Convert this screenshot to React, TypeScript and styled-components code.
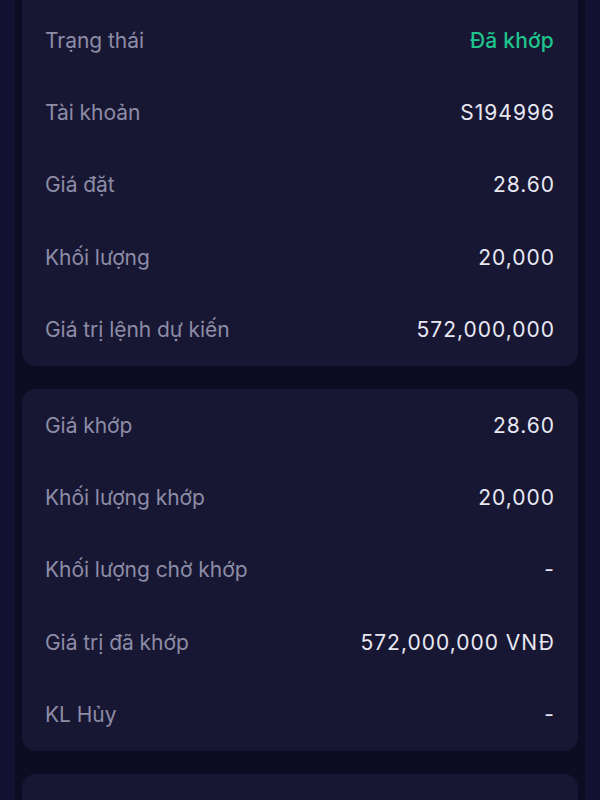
import React from "react";
import styled, { createGlobalStyle } from "styled-components";

const Global = createGlobalStyle`
  html, body { margin: 0; padding: 0; background: #121131; }
  body { font-family: Inter, "Noto Sans", sans-serif; -webkit-font-smoothing: antialiased; }
`;

const Page = styled.div`
  width: 600px;
  height: 800px;
  overflow: hidden;
  background: #121131;
  display: flex;
  justify-content: center;
`;

const Panel = styled.div`
  width: 570px;
  background: #0d0c23;
  padding: 0 7px;
  box-sizing: border-box;
  display: flex;
  flex-direction: column;
  gap: 23px;
`;

const Card = styled.div<{ $top?: boolean }>`
  flex-shrink: 0;
  background: #181733;
  border-radius: 14px;
  padding: 0 24px 0 23px;
  display: flex;
  flex-direction: column;
  margin-top: ${(p) => (p.$top ? "-20px" : "0")};
  padding-top: ${(p) => (p.$top ? "24px" : "0")};
  min-height: ${(p) => (p.$top ? "0" : "100px")};
`;

const Row = styled.div`
  flex-shrink: 0;
  height: 72.4px;
  display: flex;
  align-items: center;
  justify-content: space-between;
  font-size: 21px;
`;

const Label = styled.span`
  color: #8d8ca6;
  letter-spacing: -0.05px;
`;

const Value = styled.span<{ $tone?: "green" }>`
  color: ${(p) => (p.$tone === "green" ? "#1fc48c" : "#e8e8f2")};
  font-weight: ${(p) => (p.$tone === "green" ? 500 : 400)};
  letter-spacing: ${(p) => (p.$tone === "green" ? "0.2px" : "1px")};
  margin-right: ${(p) => (p.$tone === "green" ? "0" : "-1px")};
`;

type Item = { label: string; value: string; tone?: "green" };

const first: Item[] = [
  { label: "Trạng thái", value: "Đã khớp", tone: "green" },
  { label: "Tài khoản", value: "S194996" },
  { label: "Giá đặt", value: "28.60" },
  { label: "Khối lượng", value: "20,000" },
  { label: "Giá trị lệnh dự kiến", value: "572,000,000" },
];

const second: Item[] = [
  { label: "Giá khớp", value: "28.60" },
  { label: "Khối lượng khớp", value: "20,000" },
  { label: "Khối lượng chờ khớp", value: "-" },
  { label: "Giá trị đã khớp", value: "572,000,000 VNĐ" },
  { label: "KL Hủy", value: "-" },
];

const Rows = ({ items }: { items: Item[] }) => (
  <>
    {items.map((it) => (
      <Row key={it.label}>
        <Label>{it.label}</Label>
        <Value $tone={it.tone}>{it.value}</Value>
      </Row>
    ))}
  </>
);

export default function App() {
  return (
    <>
      <Global />
      <Page>
        <Panel>
          <Card $top>
            <Rows items={first} />
          </Card>
          <Card>
            <Rows items={second} />
          </Card>
          <Card />
        </Panel>
      </Page>
    </>
  );
}
